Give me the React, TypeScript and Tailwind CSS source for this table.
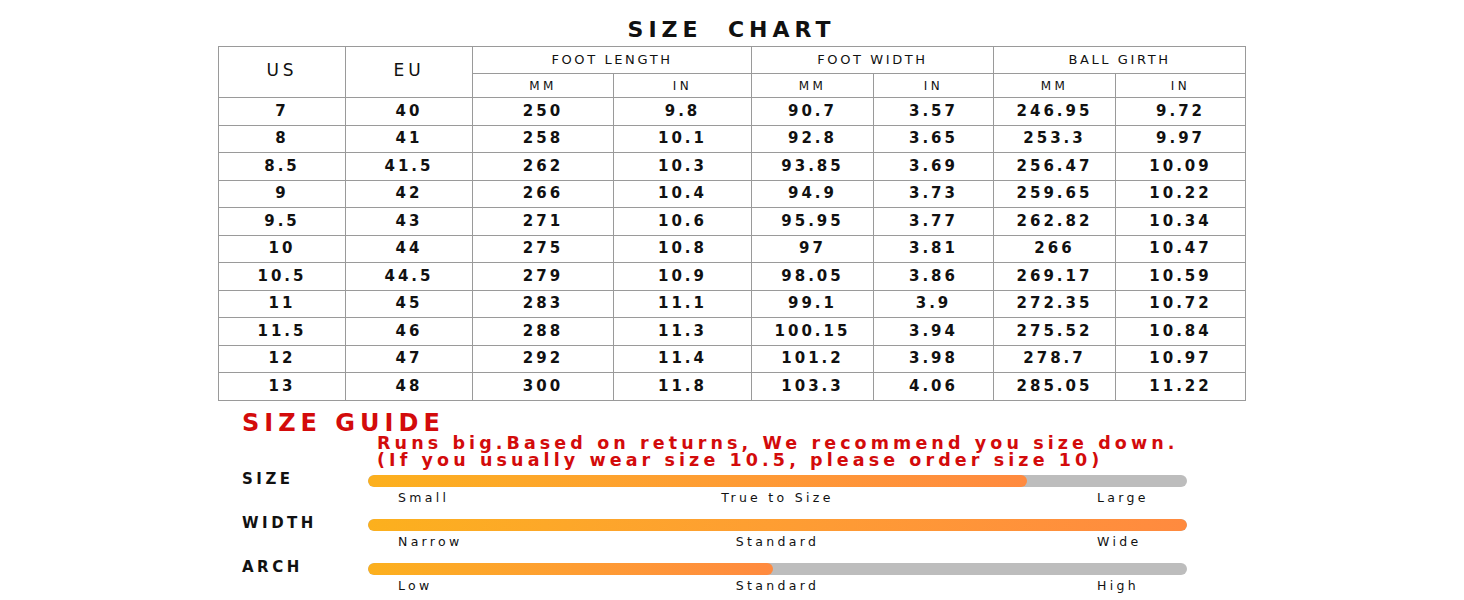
import React from "react";

const rows = [
  ["7", "40", "250", "9.8", "90.7", "3.57", "246.95", "9.72"],
  ["8", "41", "258", "10.1", "92.8", "3.65", "253.3", "9.97"],
  ["8.5", "41.5", "262", "10.3", "93.85", "3.69", "256.47", "10.09"],
  ["9", "42", "266", "10.4", "94.9", "3.73", "259.65", "10.22"],
  ["9.5", "43", "271", "10.6", "95.95", "3.77", "262.82", "10.34"],
  ["10", "44", "275", "10.8", "97", "3.81", "266", "10.47"],
  ["10.5", "44.5", "279", "10.9", "98.05", "3.86", "269.17", "10.59"],
  ["11", "45", "283", "11.1", "99.1", "3.9", "272.35", "10.72"],
  ["11.5", "46", "288", "11.3", "100.15", "3.94", "275.52", "10.84"],
  ["12", "47", "292", "11.4", "101.2", "3.98", "278.7", "10.97"],
  ["13", "48", "300", "11.8", "103.3", "4.06", "285.05", "11.22"],
];

const guides = [
  { label: "SIZE", fill: 80.5, marks: ["Small", "True to Size", "Large"] },
  { label: "WIDTH", fill: 100, marks: ["Narrow", "Standard", "Wide"] },
  { label: "ARCH", fill: 49.5, marks: ["Low", "Standard", "High"] },
];

const font = { fontFamily: '"DejaVu Sans", "Liberation Sans", sans-serif' };

const Bar = ({ fill }: { fill: number }) => (
  <div className="h-[12px] w-[819px] rounded-full bg-[#bdbdbd] overflow-hidden">
    <div
      className="h-full rounded-full bg-gradient-to-r from-[#fcb01d] to-[#ff8a3f]"
      style={{ width: `${fill}%` }}
    />
  </div>
);

export default function App() {
  return (
    <div className="w-[1464px] h-[600px] bg-white text-[#111]" style={font}>
      <div className="ml-[218px] w-[1027px] flex flex-col">
        {/* title */}
        <h1 className="h-[46px] pt-[17px] text-center text-[22px] leading-[26px] font-bold tracking-[5px]">
          SIZE&nbsp;&nbsp;CHART
        </h1>

        {/* chart */}
        <table className="w-[1027px] table-fixed border-collapse border border-[#7d7d7d] text-center">
          <colgroup>
            <col className="w-[127px]" />
            <col className="w-[127px]" />
            <col className="w-[141px]" />
            <col className="w-[138px]" />
            <col className="w-[122px]" />
            <col className="w-[120px]" />
            <col className="w-[122px]" />
            <col className="w-[130px]" />
          </colgroup>
          <thead>
            <tr className="h-[27px]">
              <th rowSpan={2} className="border border-[#9a9a9a] text-[17px] font-medium tracking-[4px] pb-[2px]">US</th>
              <th rowSpan={2} className="border border-[#9a9a9a] text-[17px] font-medium tracking-[4px] pb-[2px]">EU</th>
              <th colSpan={2} className="border border-[#9a9a9a] text-[13px] font-medium tracking-[2.6px]">FOOT LENGTH</th>
              <th colSpan={2} className="border border-[#9a9a9a] text-[13px] font-medium tracking-[2.6px]">FOOT WIDTH</th>
              <th colSpan={2} className="border border-[#9a9a9a] text-[13px] font-medium tracking-[2.6px]">BALL GIRTH</th>
            </tr>
            <tr className="h-[24px]">
              {["MM", "IN", "MM", "IN", "MM", "IN"].map((h, i) => (
                <th key={i} className="border border-[#9a9a9a] text-[12px] font-medium tracking-[3.5px]">
                  {h}
                </th>
              ))}
            </tr>
          </thead>
          <tbody>
            {rows.map((r) => (
              <tr key={r[0]} className="h-[27.5px]">
                {r.map((c, i) => (
                  <td key={i} className="border border-[#9a9a9a] text-[15px] font-semibold tracking-[3px] leading-none">
                    {c}
                  </td>
                ))}
              </tr>
            ))}
          </tbody>
        </table>
      </div>

      {/* size guide */}
      <div className="ml-[242px] flex flex-col">
        <h2 className="mt-[10px] h-[24px] text-[24px] leading-[24px] font-bold text-[#d30b0b] tracking-[5px]">
          SIZE GUIDE
        </h2>
        <div className="ml-[135px] text-[17.5px] leading-[17.5px] font-bold text-[#d30b0b] tracking-[4.1px]">
          <p>Runs big.Based on returns, We recommend you size down.</p>
          <p>(If you usually wear size 10.5, please order size 10)</p>
        </div>

        <div className="mt-[5px] flex flex-col gap-[13px]">
          {guides.map((g) => (
            <div key={g.label} className="flex">
              <div className="w-[126px] text-[15px] font-bold tracking-[3.5px] leading-[14px] -mt-[3px]">
                {g.label}
              </div>
              <div className="flex flex-col">
                <Bar fill={g.fill} />
                <div className="mt-[3px] grid grid-cols-[1fr_auto_1fr] text-[12.5px] leading-[16px] tracking-[3.3px] font-medium">
                  <span className="pl-[30px]">{g.marks[0]}</span>
                  <span>{g.marks[1]}</span>
                  <span className="justify-self-end w-[90px]">{g.marks[2]}</span>
                </div>
              </div>
            </div>
          ))}
        </div>
      </div>
    </div>
  );
}
